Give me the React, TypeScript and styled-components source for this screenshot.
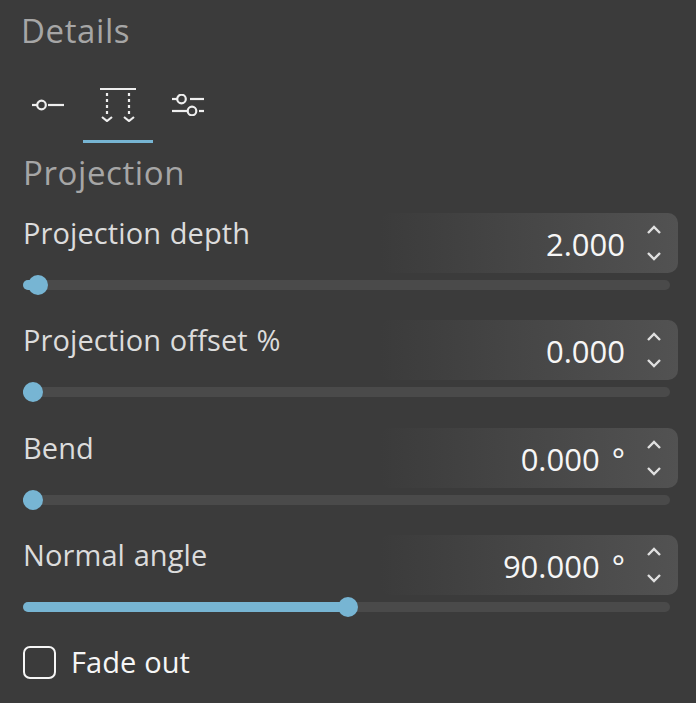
import React from "react";
import styled, { createGlobalStyle } from "styled-components";

const GlobalStyle = createGlobalStyle`
  html, body {
    margin: 0;
    background: #3b3b3b;
  }
  body {
    font-family: "Open Sans", "Noto Sans", sans-serif;
  }
`;

const Panel = styled.div`
  width: 696px;
  height: 703px;
  overflow: hidden;
  box-sizing: border-box;
  padding: 10px 18px 0 23px;
  background: #3b3b3b;
`;

const Title = styled.h1`
  margin: 0 0 0 -2px;
  font-size: 33px;
  line-height: 42px;
  font-weight: 400;
  letter-spacing: 0.6px;
  color: #a6a6a6;
`;

const Tabs = styled.div`
  display: flex;
  align-items: flex-start;
  margin-top: 21px;
`;

const Tab = styled.button<{ $width: number; $active?: boolean }>`
  width: ${(p) => p.$width}px;
  height: 70px;
  box-sizing: border-box;
  padding: 0 0 3px;
  border: 0;
  border-bottom: 3px solid ${(p) => (p.$active ? "#77b5d3" : "transparent")};
  background: none;
  display: flex;
  align-items: center;
  justify-content: center;
`;

const FirstTab = styled(Tab)`
  margin-right: 10px;
`;

const Section = styled.h2`
  margin: 9px 0 0 0;
  font-size: 33px;
  line-height: 42px;
  font-weight: 400;
  letter-spacing: 0.6px;
  color: #a6a6a6;
`;

const Fields = styled.div`
  display: flex;
  flex-direction: column;
  gap: 30.33px;
  margin-top: 19px;
`;

const Field = styled.div`
  display: flex;
  flex-direction: column;
`;

const FieldTop = styled.div`
  display: flex;
  justify-content: space-between;
  align-items: flex-start;
  height: 60px;
`;

const Label = styled.label`
  font-size: 29px;
  line-height: 40px;
  letter-spacing: 0.1px;
  word-spacing: 1px;
  color: #dcdcdc;
`;

const Stepper = styled.div`
  width: 298px;
  height: 60px;
  box-sizing: border-box;
  display: flex;
  align-items: center;
  justify-content: flex-end;
  gap: 22px;
  padding-right: 17px;
  border-radius: 10px;
  background: linear-gradient(to right, #3b3b3b 0%, #525252 100%);
`;

const Value = styled.span`
  padding-top: 2px;
  font-size: 31px;
  word-spacing: 4px;
  color: #f6f6f6;
`;

const Arrows = styled.div`
  display: flex;
  flex-direction: column;
  gap: 18px;
`;

const Chevron = styled.svg`
  display: block;
`;

const Track = styled.div`
  position: relative;
  height: 10px;
  width: 647px;
  margin-top: 7px;
  border-radius: 5px;
  background: #4a4a4a;
`;

const Fill = styled.div`
  height: 100%;
  border-radius: 5px;
  background: #77b5d3;
`;

const Thumb = styled.div`
  position: absolute;
  top: -5px;
  width: 20px;
  height: 20px;
  margin-left: -10px;
  border-radius: 50%;
  background: #77b5d3;
`;

const CheckRow = styled.div`
  display: flex;
  align-items: center;
  gap: 15px;
  margin-top: 34px;
`;

const Box = styled.div`
  width: 33px;
  height: 33px;
  box-sizing: border-box;
  border: 2px solid #f6f6f6;
  border-radius: 7px;
`;

const CheckLabel = styled.span`
  padding-bottom: 1px;
  font-size: 29px;
  line-height: 31px;
  letter-spacing: 0.1px;
  color: #f6f6f6;
`;

const UpDown = ({ up }: { up?: boolean }) => (
  <Chevron width="14" height="9" viewBox="0 0 14 9" fill="none" stroke="#e0e0e0" strokeWidth="2.4">
    <path d={up ? "M1 8l6-6 6 6" : "M1 1l6 6 6-6"} />
  </Chevron>
);

const SingleIcon = () => (
  <svg width="32" height="12" viewBox="0 0 32 12" fill="none" stroke="#eeeeee" strokeWidth="2.200">
    <path d="M0 6h5" />
    <circle cx="9.500" cy="6" r="4.300" />
    <path d="M16 6h16" />
  </svg>
);

const ProjectionIcon = () => (
  <svg width="36" height="34" viewBox="0 0 36 34" fill="none" stroke="#eeeeee" strokeWidth="2.200">
    <path d="M0 1h36" />
    <path d="M7 5v22M29 5v22" strokeDasharray="3 3" />
    <path d="M2 29l5 4 5-4M24 29l5 4 5-4" />
  </svg>
);

const TuneIcon = () => (
  <svg width="32" height="22" viewBox="0 0 32 22" fill="none" stroke="#eeeeee" strokeWidth="2.200">
    <path d="M0 5h5" />
    <circle cx="9.500" cy="5" r="4.300" />
    <path d="M18 5h14" />
    <path d="M0 17h15" />
    <circle cx="20" cy="17" r="4.300" />
    <path d="M27 17h5" />
  </svg>
);

const rows = [
  { label: "Projection depth", value: "2.000", pct: 2.3 },
  { label: "Projection offset %", value: "0.000", pct: 1.5 },
  { label: "Bend", value: "0.000 °", pct: 1.5 },
  { label: "Normal angle", value: "90.000 °", pct: 50.3 },
];

export default function App() {
  return (
    <>
      <GlobalStyle />
      <Panel>
        <Title>Details</Title>
        <Tabs>
          <FirstTab $width={50}><SingleIcon /></FirstTab>
          <Tab $width={70} $active><ProjectionIcon /></Tab>
          <Tab $width={70}><TuneIcon /></Tab>
        </Tabs>
        <Section>Projection</Section>
        <Fields>
          {rows.map((r) => (
            <Field key={r.label}>
              <FieldTop>
                <Label>{r.label}</Label>
                <Stepper>
                  <Value>{r.value}</Value>
                  <Arrows>
                    <UpDown up />
                    <UpDown />
                  </Arrows>
                </Stepper>
              </FieldTop>
              <Track>
                <Fill style={{ width: `${r.pct}%` }} />
                <Thumb style={{ left: `${r.pct}%` }} />
              </Track>
            </Field>
          ))}
        </Fields>
        <CheckRow>
          <Box />
          <CheckLabel>Fade out</CheckLabel>
        </CheckRow>
      </Panel>
    </>
  );
}
